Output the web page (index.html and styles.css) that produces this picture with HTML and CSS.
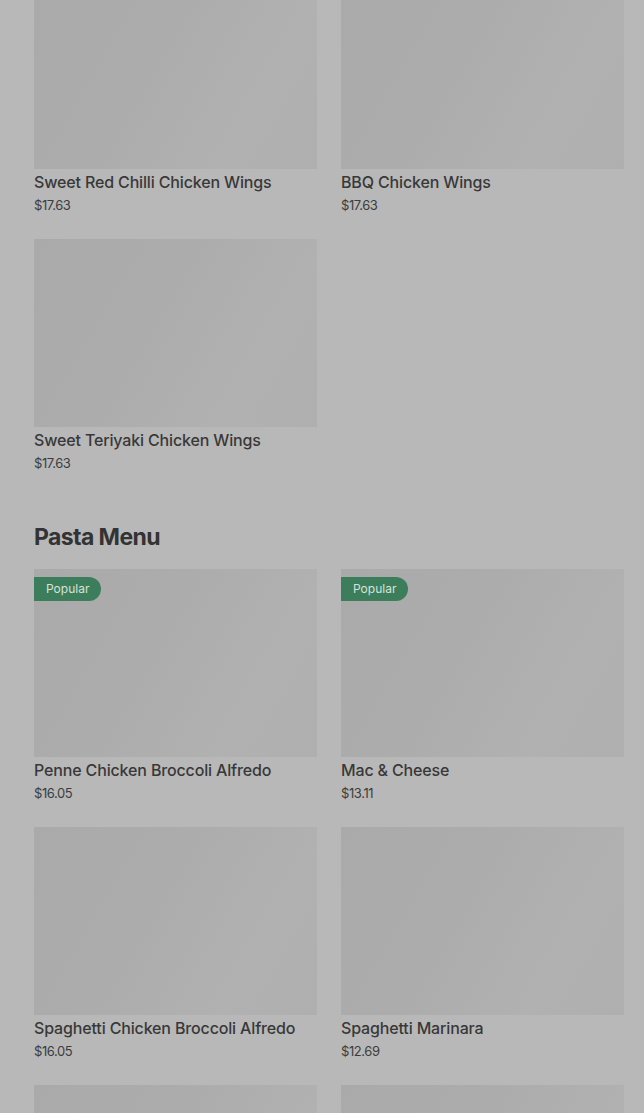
FILE: index.html
```html
<!DOCTYPE html>
<html>
<head>
<meta charset="utf-8">
<link rel="stylesheet" href="styles.css">
</head>
<body>
<main class="page">
  <section class="grid grid-top">
    <div class="card">
      <div class="thumb"></div>
      <div class="name">Sweet Red Chilli Chicken Wings</div>
      <div class="price">$17.63</div>
    </div>
    <div class="card">
      <div class="thumb"></div>
      <div class="name">BBQ Chicken Wings</div>
      <div class="price">$17.63</div>
    </div>
    <div class="card">
      <div class="thumb"></div>
      <div class="name">Sweet Teriyaki Chicken Wings</div>
      <div class="price">$17.63</div>
    </div>
  </section>

  <h2 class="section-title">Pasta Menu</h2>

  <section class="grid">
    <div class="card">
      <div class="thumb"><span class="badge">Popular</span></div>
      <div class="name">Penne Chicken Broccoli Alfredo</div>
      <div class="price">$16.05</div>
    </div>
    <div class="card">
      <div class="thumb"><span class="badge">Popular</span></div>
      <div class="name">Mac &amp; Cheese</div>
      <div class="price">$13.11</div>
    </div>
    <div class="card">
      <div class="thumb"></div>
      <div class="name">Spaghetti Chicken Broccoli Alfredo</div>
      <div class="price">$16.05</div>
    </div>
    <div class="card">
      <div class="thumb"></div>
      <div class="name">Spaghetti Marinara</div>
      <div class="price">$12.69</div>
    </div>
    <div class="card">
      <div class="thumb"></div>
      <div class="name">&nbsp;</div>
      <div class="price">&nbsp;</div>
    </div>
    <div class="card">
      <div class="thumb"></div>
      <div class="name">&nbsp;</div>
      <div class="price">&nbsp;</div>
    </div>
  </section>
</main>
</body>
</html>
```

FILE: styles.css
```css
html, body {
  margin: 0;
  padding: 0;
  background: #b8b8b8;
  overflow: hidden;
  height: 1113px;
}

.page {
  padding: 0 20px 0 34px;
  font-family: "Inter", "Roboto", "Liberation Sans", sans-serif;
  color: #363636;
  margin-top: -19px;
}

.grid {
  display: grid;
  grid-template-columns: 283px 283px;
  column-gap: 24px;
  row-gap: 25px;
}

.card {
  display: flex;
  flex-direction: column;
}

.thumb {
  position: relative;
  height: 188px;
  background: linear-gradient(120deg, #aaaaaa 0%, #acacac 40%, #b1b1b1 75%, #afafaf 100%);
}

.name {
  margin-top: 3px;
  font-size: 16px;
  line-height: 20px;
  font-weight: 500;
  color: #383838;
  letter-spacing: -0.15px;
}

.price {
  margin-top: 5px;
  font-size: 13px;
  line-height: 17px;
  color: #3c3c3c;
  letter-spacing: -0.4px;
}

.section-title {
  margin: 51px 0 18px;
  font-size: 23px;
  line-height: 28px;
  font-weight: 700;
  color: #333333;
  letter-spacing: -0.6px;
}

.badge {
  position: absolute;
  top: 8px;
  left: 0;
  height: 24px;
  line-height: 24px;
  padding: 0 12px;
  font-size: 12px;
  color: #d6e2da;
  background: #3c7e5c;
  border-radius: 0 12px 12px 0;
}
```
